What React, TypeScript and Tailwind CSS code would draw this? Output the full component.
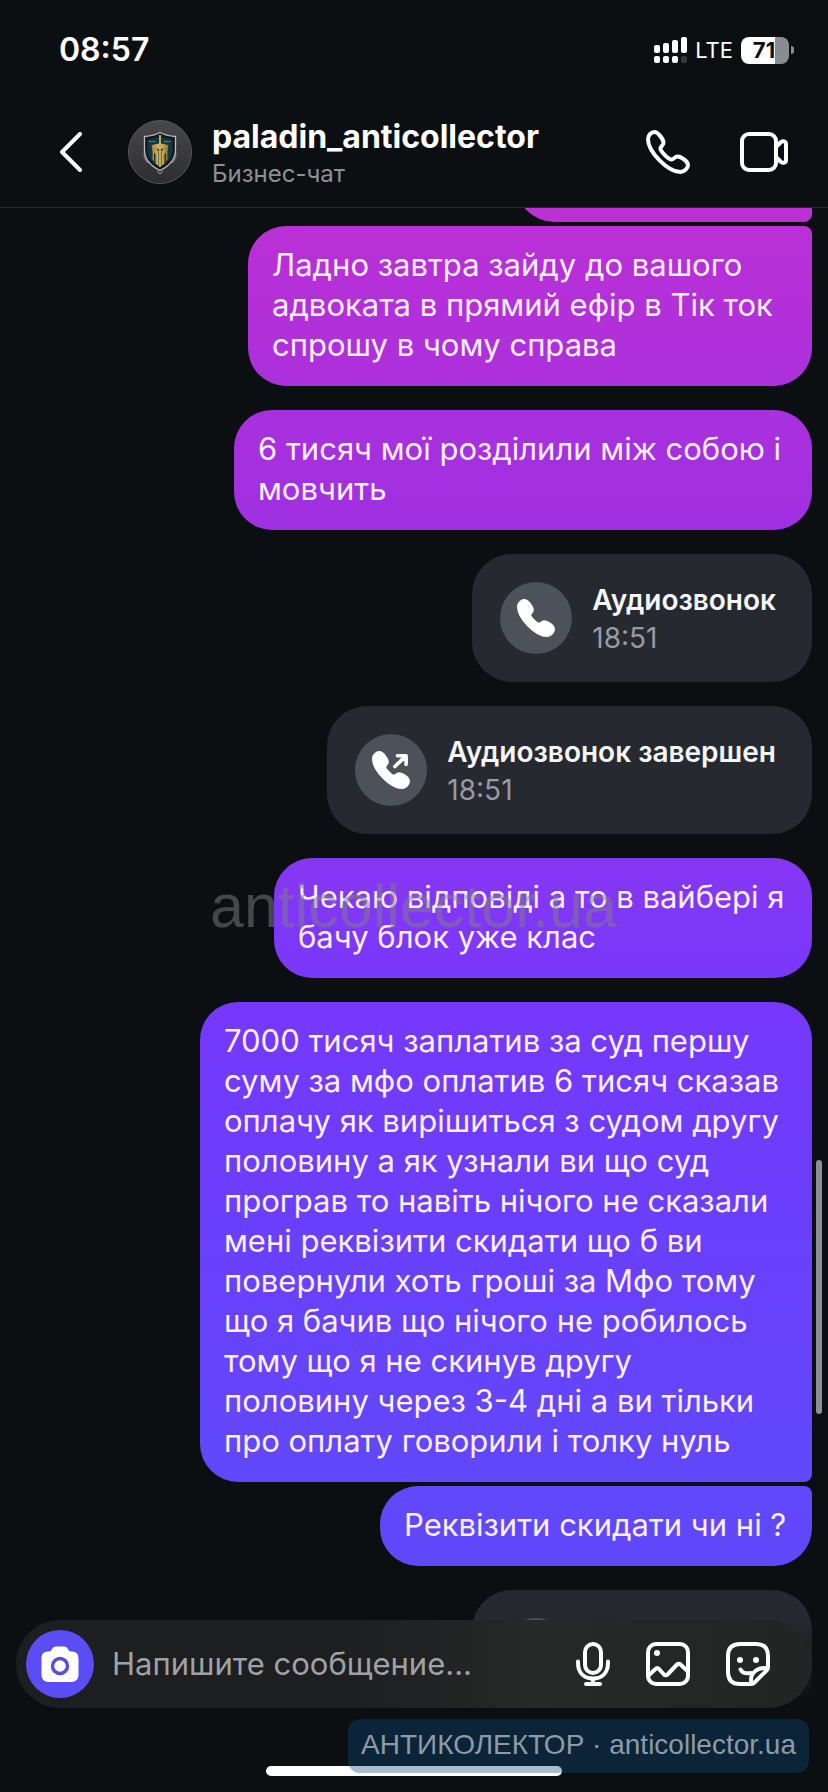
import type { ReactNode } from "react";

const PHONE =
  "M2 9C2 5 5.5 2 8.5 2C12 2 17.5 9.5 17.5 12.5C17.5 15.500 14.500 16 14.500 18.500C14.500 21.500 22.500 29.500 25.500 29.500C28 29.500 28.500 26.500 31.500 26.500C35 26.500 42 31.5 42 35C42 38.5 38 42 34.5 42C22 42 2 22 2 9Z";

type BubbleProps = { text: string; shape: string };

function Bubble({ text, shape }: BubbleProps) {
  return (
    <p
      className={`max-w-full whitespace-pre-line bg-[linear-gradient(180deg,#c22ed2_0%,#bb30d5_12%,#a030e2_29%,#8637f3_48%,#7638fc_56%,#6a3ffc_68%,#6148fa_83%,#5c4afa_100%)] bg-fixed pt-[19px] pr-4 pb-[21px] pl-6 text-[31px] leading-10 text-[#fbeffe] ${shape}`}
    >
      {text}
    </p>
  );
}

function CallCard({ title, time, ended }: { title: string; time: string; ended?: boolean }) {
  return (
    <article className="flex h-32 w-fit items-center gap-5 rounded-[40px] bg-[#262930] pr-9 pl-7">
      <div className="flex size-[72px] items-center justify-center rounded-full bg-[#4d5159]">
        <svg viewBox="0 0 44 44" className="size-[38px] overflow-visible" fill="none">
          <path d={PHONE} fill="white" stroke="white" strokeWidth="4" strokeLinejoin="round" />
          {ended && (
            <path
              d="M26.5 18L39 6M29.5 5.5H39.5V15.5"
              stroke="white"
              strokeWidth="4.2"
              strokeLinecap="round"
              strokeLinejoin="round"
            />
          )}
        </svg>
      </div>
      <div className="pt-0.5 text-[28px] leading-[38px]">
        <h2 className="font-semibold text-[#f4f6f8]">{title}</h2>
        <p className="text-[#979ba3]">{time}</p>
      </div>
    </article>
  );
}

function IconButton({ label, children }: { label: string; children: ReactNode }) {
  return (
    <button type="button" aria-label={label} className="shrink-0">
      {children}
    </button>
  );
}

const stroke = {
  fill: "none",
  stroke: "currentColor",
  strokeWidth: 4,
  strokeLinecap: "round" as const,
  strokeLinejoin: "round" as const,
};

function StatusBar() {
  return (
    <div className="flex h-[100px] items-center justify-between pr-[34px] pl-[59px]">
      <time className="text-[32px] font-semibold">08:57</time>
      <div className="flex items-center gap-2">
        <svg viewBox="0 0 33 27" className="h-[27px] w-[33px]" fill="currentColor">
          <rect x="0" y="8" width="6" height="8" rx="2" />
          <rect x="9" y="6" width="6" height="10" rx="2" />
          <rect x="18" y="3" width="6" height="13" rx="2" />
          <rect x="27" y="0" width="6" height="16" rx="2" />
          <rect x="0" y="19" width="6" height="7" rx="2" />
          <rect x="9" y="19" width="6" height="7" rx="2" />
          <rect x="18" y="19" width="6" height="7" rx="2" />
          <rect x="27" y="19" width="6" height="7" rx="2" fill="#34393b" />
        </svg>
        <span className="text-[22px] leading-7">LTE</span>
        <div className="flex items-center gap-0.5">
          <div className="flex h-[27px] w-12 items-center justify-center rounded-lg bg-[linear-gradient(90deg,white_71%,#8b8c8e_71%)] pr-0.5 text-[22px] font-bold text-[#0b0f12]">
            71
          </div>
          <div className="h-2 w-[3px] rounded-r-full bg-[#8b8c8e]" />
        </div>
      </div>
    </div>
  );
}

function Avatar() {
  return (
    <svg viewBox="0 0 64 64" className="size-16 shrink-0" role="img" aria-label="paladin_anticollector">
      <defs>
        <linearGradient id="disc" x1="0" y1="0" x2="0" y2="1">
          <stop offset="0" stopColor="#48484a" />
          <stop offset="1" stopColor="#2d2c2f" />
        </linearGradient>
        <linearGradient id="gold" x1="0" y1="0" x2="1" y2="0">
          <stop offset="0" stopColor="#a87f3c" />
          <stop offset="0.5" stopColor="#e8b75c" />
          <stop offset="1" stopColor="#96702f" />
        </linearGradient>
      </defs>
      <circle cx="32" cy="32" r="31.5" fill="url(#disc)" stroke="#58585a" />
      <path d="M16 33C16 39 18 42 21 43M48 33C48 39 46 42 43 43M29 51L32 54L35 51" fill="none" stroke="#77787a" strokeWidth="1.2" />
      <path d="M32 12.5C36.5 15 41 16 47.5 16.5V30C47.5 40 41 46 32 50.5C23 46 16.5 40 16.5 30V16.5C23 16 27.5 15 32 12.5Z" fill="#16171a" stroke="#b9bcc0" strokeWidth="1.3" />
      <path d="M32 16C36 18 40 19 44.5 19.5V30C44.5 38 39.5 43 32 47C24.5 43 19.5 38 19.5 30V19.5C24 19 28 18 32 16Z" fill="#0e3a40" />
      <path d="M21 21.5H28M36 21.5H43" stroke="#6da3a5" strokeWidth="1.2" strokeDasharray="1.5 0.7" />
      <path
        d="M23.5 25L31 23.500V29L28 28.500L30.500 31V46L27.500 43.500V34L26 33V41.500L24.500 39.500V31ZM40.5 25L33 23.500V29L36 28.500L33.500 31V46L36.500 43.500V34L38 33V41.500L39.500 39.500V31Z"
        fill="url(#gold)"
      />
      <path d="M32 15V47" stroke="#f0c76e" strokeWidth="1.6" />
    </svg>
  );
}

export default function App() {
  return (
    <div className="relative flex h-screen flex-col overflow-hidden bg-[#0b0f12] font-[Inter,'Liberation_Sans',sans-serif] text-white">
      <header className="h-52 shrink-0 border-b border-[#262a2d]">
        <StatusBar />
        <div className="flex h-[104px] items-center pr-10 pl-[60px]">
          <IconButton label="Назад">
            <svg viewBox="0 0 24 40" className="h-10 w-6" {...stroke}>
              <path d="M20 2L2 20L20 38" />
            </svg>
          </IconButton>
          <div className="ml-11">
            <Avatar />
          </div>
          <div className="ml-5 flex-1">
            <h1 className="text-[32px] leading-[44px] font-bold">paladin_anticollector</h1>
            <p className="text-[24px] leading-[30px] text-[#8e9194]">Бизнес-чат</p>
          </div>
          <div className="flex items-center gap-[50px]">
            <IconButton label="Аудиозвонок">
              <svg viewBox="0 0 44 44" className="size-11" {...stroke}>
                <path d={PHONE} />
              </svg>
            </IconButton>
            <IconButton label="Видеозвонок">
              <svg viewBox="0 0 48 40" className="h-10 w-12" {...stroke}>
                <rect x="2" y="2" width="34" height="36" rx="7" />
                <path d="M36 15L41 10C43 8.5 46 9 46 12V28C46 31 43 31.5 41 30L36 25" />
              </svg>
            </IconButton>
          </div>
        </div>
      </header>

      <main className="flex min-h-0 flex-1 flex-col items-end gap-6 overflow-hidden pr-4">
        <div className="-mt-[66px] flex shrink-0 flex-col items-end gap-1">
          <div className="h-20 w-[296px] rounded-[38px] rounded-br-lg bg-[#bb30d5]" />
          <Bubble
            text={"Ладно завтра зайду до вашого\nадвоката в прямий ефір в Тік ток\nспрошу в чому справа"}
            shape="w-[564px] rounded-[38px] rounded-tr-lg"
          />
        </div>
        <Bubble text={"6 тисяч мої розділили між собою і\nмовчить"} shape="w-[578px] rounded-[38px]" />
        <CallCard title="Аудиозвонок" time="18:51" />
        <CallCard title="Аудиозвонок завершен" time="18:51" ended />
        <Bubble text={"Чекаю відповіді а то в вайбері я\nбачу блок уже клас"} shape="w-[538px] rounded-[38px]" />
        <div className="flex shrink-0 flex-col items-end gap-1">
          <Bubble
            text={
              "7000 тисяч заплатив за суд першу\nсуму за мфо оплатив 6 тисяч сказав\nоплачу як вирішиться з судом другу\nполовину а як узнали ви що суд\nпрограв то навіть нічого не сказали\nмені реквізити скидати що б ви\nповернули хоть гроші за Мфо тому\nщо я бачив що нічого не робилось\nтому що я не скинув другу\nполовину через 3-4 дні а ви тільки\nпро оплату говорили і толку нуль"
            }
            shape="w-[612px] rounded-[38px] rounded-br-lg"
          />
          <Bubble text="Реквізити скидати чи ні ?" shape="w-[432px] rounded-[38px] rounded-tr-lg" />
        </div>
        <CallCard title="Аудиозвонок" time="18:51" />
      </main>

      {/* scroll thumb */}
      <div className="absolute top-[1160px] right-1.5 h-[254px] w-1.5 rounded-full bg-[#8d8f91]" />

      <div className="pointer-events-none absolute top-[872px] left-[210px] font-['Liberation_Sans',Arial,sans-serif] text-[61px] leading-[68px] text-[#808080]/50">
        anticollector.ua
      </div>

      <footer className="absolute inset-x-0 bottom-0 bg-[linear-gradient(180deg,transparent,#0b0f12_50%)] px-4 pb-[84px]">
        <form className="flex h-[88px] items-center rounded-full bg-[linear-gradient(90deg,#1c1e1f_40%,#272828_65%,#232525_100%)] pr-[42px] pl-2.5">
          <button
            type="button"
            aria-label="Камера"
            className="flex size-[68px] shrink-0 items-center justify-center rounded-full bg-[#5b4df5]"
          >
            <svg viewBox="0 0 38 36" className="h-9 w-[38px]">
              <path
                d="M9 5.5C11 4.5 11 0.5 15 0.5H23C27 0.5 27 4.5 29 5.5C35 5.5 37.5 7 37.5 13V28C37.5 33.5 35 36 29.5 36H8.5C3 36 0.5 33.5 0.5 28V13C0.5 7 3 5.5 9 5.5Z"
                fill="white"
              />
              <circle cx="19" cy="20" r="7.5" fill="white" stroke="#5b4fd6" strokeWidth="3.5" />
            </svg>
          </button>
          <input
            type="text"
            aria-label="Сообщение"
            placeholder="Напишите сообщение..."
            className="ml-[18px] min-w-0 flex-1 bg-transparent text-[31px] leading-10 outline-none placeholder:text-[#9fa2a5]"
          />
          <div className="flex items-center gap-9">
            <IconButton label="Голосовое сообщение">
              <svg viewBox="0 0 34 44" className="h-11 w-[34px]" {...stroke}>
                <rect x="9" y="2" width="16" height="29" rx="8" />
                <path d="M2 19.500V20.500C2 31 8 36.500 17 36.500C26 36.500 32 31 32 20.500V19.500M17 37V42M10 42H24" />
              </svg>
            </IconButton>
            <IconButton label="Фото">
              <svg viewBox="0 0 44 44" className="size-11" {...stroke}>
                <rect x="2" y="2" width="40" height="40" rx="8" />
                <circle cx="11" cy="11" r="3" fill="currentColor" stroke="none" />
                <path d="M2.5 33.500L9.500 27C10.500 26 12 26 13 27L18 32.500C19 33.500 20.500 33.500 21.500 32.500L31 22.500C32 21.500 33.500 21.500 34.500 22.500L41.5 29" />
              </svg>
            </IconButton>
            <IconButton label="Стикеры">
              <svg viewBox="0 0 44 44" className="size-11" {...stroke}>
                <path d="M42 25V14C42 6 38 2 30 2H14C6 2 2 6 2 14V30C2 38 6 42 14 42H25C26.500 42 27.500 41.500 28.500 40.500L40.500 28.500C41.500 27.500 42 26.500 42 25Z" />
                <path d="M25 41V38C25 31 31 26 38 26H41" />
                <path d="M14.5 27.500C16.5 31 20 32 25 31" />
                <circle cx="14" cy="18" r="3" fill="currentColor" stroke="none" />
                <circle cx="30" cy="18" r="3" fill="currentColor" stroke="none" />
              </svg>
            </IconButton>
          </div>
        </form>
      </footer>

      <div className="absolute bottom-4 left-[266px] h-2.5 w-[296px] rounded-full bg-white" />
      <a
        href="#"
        className="absolute right-[19px] bottom-[19px] rounded-xl bg-[#0e4c7c]/36 px-[13px] pt-2.5 pb-3 font-['Liberation_Sans',Arial,sans-serif] text-[28px] leading-8 text-[#8b9ba7]"
      >
        АНТИКОЛЕКТОР · anticollector.ua
      </a>
    </div>
  );
}
